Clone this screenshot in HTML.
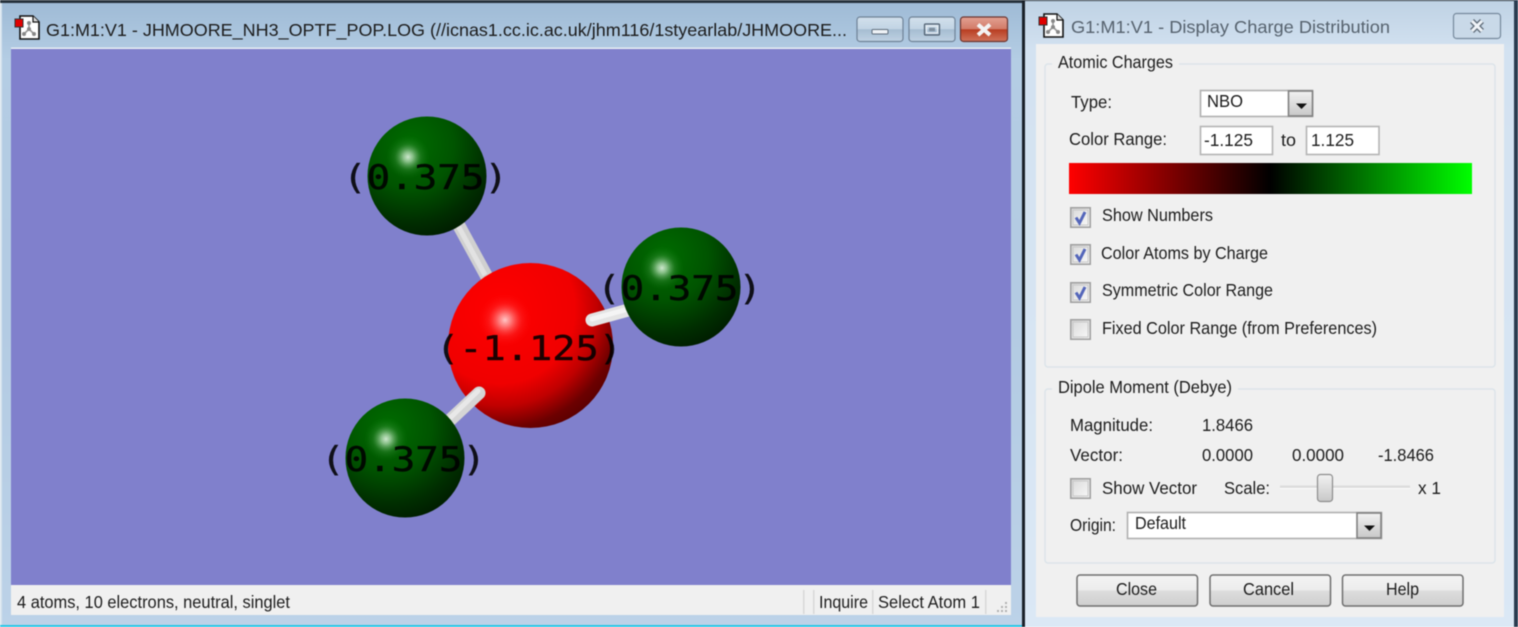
<!DOCTYPE html>
<html>
<head>
<meta charset="utf-8">
<title>G1:M1:V1</title>
<style>
html,body{margin:0;padding:0;width:1518px;height:627px;overflow:hidden;background:#fff}
svg{display:block;filter:blur(.45px)}
text{font-family:"Liberation Sans",sans-serif;font-size:17.5px;fill:#1c1c1c}
.m{font-family:"DejaVu Sans Mono","Liberation Mono",monospace;font-size:34px;fill:#000;fill-opacity:.88;stroke:#000;stroke-opacity:.7;stroke-width:.5px}
</style>
</head>
<body>
<svg width="1518" height="627" viewBox="0 0 1518 627" xmlns="http://www.w3.org/2000/svg">
<defs>
<linearGradient id="lf" x1="0" y1="0" x2="0" y2="1"><stop offset="0" stop-color="#9fbbd6"/><stop offset=".09" stop-color="#b4cde4"/><stop offset=".5" stop-color="#b3cbe3"/><stop offset="1" stop-color="#bcd2e8"/></linearGradient>
<linearGradient id="rf" x1="0" y1="0" x2="0" y2="1"><stop offset="0" stop-color="#bfd2e4"/><stop offset=".08" stop-color="#d3e2f1"/><stop offset="1" stop-color="#dbe8f5"/></linearGradient>
<linearGradient id="bar" x1="0" y1="0" x2="1" y2="0"><stop offset="0" stop-color="#ff0000"/><stop offset=".5" stop-color="#000"/><stop offset="1" stop-color="#00ff00"/></linearGradient>
<linearGradient id="btn" x1="0" y1="0" x2="0" y2="1"><stop offset="0" stop-color="#f4f4f4"/><stop offset=".48" stop-color="#ececec"/><stop offset=".52" stop-color="#dcdcdc"/><stop offset="1" stop-color="#cfcfcf"/></linearGradient>
<linearGradient id="wb" x1="0" y1="0" x2="0" y2="1"><stop offset="0" stop-color="#d2e0ec"/><stop offset=".48" stop-color="#c2d4e4"/><stop offset=".52" stop-color="#a6bdd2"/><stop offset="1" stop-color="#c0d2e3"/></linearGradient>
<linearGradient id="cb" x1="0" y1="0" x2="0" y2="1"><stop offset="0" stop-color="#e3a193"/><stop offset=".48" stop-color="#d27c69"/><stop offset=".52" stop-color="#b83e22"/><stop offset="1" stop-color="#d0745c"/></linearGradient>
<linearGradient id="dd" x1="0" y1="0" x2="0" y2="1"><stop offset="0" stop-color="#f2f2f2"/><stop offset="1" stop-color="#c8c8c8"/></linearGradient>
<linearGradient id="chk" x1="0" y1="0" x2="1" y2="1"><stop offset="0" stop-color="#d8d8d8"/><stop offset="1" stop-color="#fafafa"/></linearGradient>
<radialGradient id="g" cx=".36" cy=".24" r=".92"><stop offset="0" stop-color="#006c00"/><stop offset=".4" stop-color="#005400"/><stop offset=".7" stop-color="#002e00"/><stop offset="1" stop-color="#001000"/></radialGradient>
<radialGradient id="r" cx=".32" cy=".28" r=".9"><stop offset="0" stop-color="#ff0000"/><stop offset=".5" stop-color="#f00000"/><stop offset=".65" stop-color="#c00000"/><stop offset=".8" stop-color="#6c0000"/><stop offset="1" stop-color="#400000"/></radialGradient>
<radialGradient id="hg"><stop offset="0" stop-color="#cfe8cf"/><stop offset=".22" stop-color="#a0d0a0" stop-opacity=".85"/><stop offset=".6" stop-color="#50a050" stop-opacity=".28"/><stop offset="1" stop-color="#108010" stop-opacity="0"/></radialGradient>
<radialGradient id="hr"><stop offset="0" stop-color="#ffc8c8"/><stop offset=".22" stop-color="#ff9090" stop-opacity=".85"/><stop offset=".6" stop-color="#ff4040" stop-opacity=".3"/><stop offset="1" stop-color="#ff0000" stop-opacity="0"/></radialGradient>
<g id="ic">
<path d="M5 1H18L24 7V24H5Z" fill="#fff" stroke="#111" stroke-width="1.6"/>
<path d="M18 1V7H24" fill="#ddd" stroke="#111" stroke-width="1.2"/>
<path d="M14 8V14L9 19M14 14L19 19" fill="none" stroke="#999" stroke-width="1.6"/>
<circle cx="14" cy="8" r="2" fill="#888"/><circle cx="14" cy="14" r="2" fill="#888"/><circle cx="9" cy="19" r="2" fill="#888"/><circle cx="19" cy="19" r="2" fill="#888"/>
<rect x="0" y="4" width="8" height="8" fill="#e00000" stroke="#333" stroke-width="1"/>
</g>
<g id="tick"><rect x=".8" y=".8" width="19.4" height="19.4" fill="url(#chk)" stroke="#a0a0a0" stroke-width="1.6"/><rect x="3" y="3" width="15" height="15" fill="none" stroke="#c8c8c8" stroke-width="1"/></g>
<path id="v" d="M6 10.500L9.500 16L15 5" fill="none" stroke="#5466ba" stroke-width="3"/>
</defs>

<rect width="1518" height="627" fill="#26323c"/>

<!-- left window -->
<rect x="0" y="3" width="1022" height="622" fill="url(#lf)"/>
<rect x="0" y="3" width="2" height="622" fill="#d8e4ee"/>
<rect x="0" y="625" width="1023" height="2" fill="#27c6e6"/>
<use href="#ic" x="15" y="15"/>
<text x="46" y="36" textLength="801" lengthAdjust="spacingAndGlyphs" fill="#151515">G1:M1:V1 - JHMOORE_NH3_OPTF_POP.LOG (//icnas1.cc.ic.ac.uk/jhm116/1styearlab/JHMOORE...</text>
<rect x="857" y="17" width="46" height="24.5" rx="3" fill="url(#wb)" stroke="#6f8296" stroke-width="1.2"/>
<rect x="909" y="17" width="46" height="24.5" rx="3" fill="url(#wb)" stroke="#6f8296" stroke-width="1.2"/>
<rect x="960.5" y="17" width="47" height="24.5" rx="3" fill="url(#cb)" stroke="#6b3530" stroke-width="1.2"/>
<rect x="872" y="29.5" width="16" height="4.5" rx="1" fill="#eef2f6" stroke="#5d6c7c"/>
<rect x="924.5" y="24" width="15" height="11" rx="1" fill="none" stroke="#4f5e6e" stroke-width="1.2"/>
<rect x="926.5" y="26" width="11" height="7" fill="none" stroke="#eef2f6" stroke-width="1"/>
<rect x="929" y="27.8" width="6" height="3.4" fill="#7d8d9d"/>
<path d="M978 24.500L990 35M990 24.500L978 35" stroke="#f3f3f3" stroke-width="4"/>
<rect x="11" y="47.5" width="1000" height="2" fill="#e8eef4"/>
<rect x="11" y="49" width="1000" height="536" fill="#8080cc"/>
<rect x="11" y="585" width="1000" height="30" fill="#f0f0f0"/>

<!-- molecule -->
<line x1="457.5" y1="223" x2="487" y2="277" stroke="#d0d0d0" stroke-width="13"/>
<line x1="456" y1="222" x2="485" y2="275" stroke="#e2e2e2" stroke-width="5"/>
<circle cx="530.5" cy="345.5" r="82.5" fill="url(#r)"/>
<circle cx="505" cy="320" r="28" fill="url(#hr)"/>
<line x1="448" y1="422" x2="479" y2="393" stroke="#d5d5d5" stroke-width="13" stroke-linecap="round"/>
<line x1="448" y1="420" x2="478" y2="391" stroke="#e8e8e8" stroke-width="5" stroke-linecap="round"/>
<line x1="592" y1="320" x2="632" y2="309" stroke="#e4e4e4" stroke-width="13" stroke-linecap="round"/>
<line x1="592" y1="319" x2="632" y2="308" stroke="#f4f4f4" stroke-width="5" stroke-linecap="round"/>
<circle cx="427" cy="176" r="59.5" fill="url(#g)"/>
<circle cx="408" cy="157" r="22" fill="url(#hg)"/>
<circle cx="681" cy="287" r="59.5" fill="url(#g)"/>
<circle cx="662" cy="268" r="22" fill="url(#hg)"/>
<circle cx="405" cy="458" r="59.5" fill="url(#g)"/>
<circle cx="386" cy="439" r="22" fill="url(#hg)"/>
<text class="m" x="343" y="189" textLength="165" lengthAdjust="spacingAndGlyphs">(0.375)</text>
<text class="m" x="597" y="300" textLength="165" lengthAdjust="spacingAndGlyphs">(0.375)</text>
<text class="m" x="321" y="471" textLength="165" lengthAdjust="spacingAndGlyphs">(0.375)</text>
<text class="m" x="436" y="360" textLength="186" lengthAdjust="spacingAndGlyphs">(-1.125)</text>

<!-- status bar -->
<text x="17" y="608" textLength="273" lengthAdjust="spacingAndGlyphs">4 atoms, 10 electrons, neutral, singlet</text>
<g fill="#d8d8d8"><rect x="803" y="590" width="1.5" height="24"/><rect x="813" y="590" width="1.5" height="24"/><rect x="872" y="590" width="1.5" height="24"/><rect x="985" y="590" width="1.5" height="24"/></g>
<text x="819" y="608" textLength="49" lengthAdjust="spacingAndGlyphs">Inquire</text>
<text x="878" y="608" textLength="102" lengthAdjust="spacingAndGlyphs">Select Atom 1</text>
<g fill="#b0b0b0"><rect x="1005" y="602" width="2" height="2"/><rect x="1001" y="606" width="2" height="2"/><rect x="1005" y="606" width="2" height="2"/><rect x="997" y="610" width="2" height="2"/><rect x="1001" y="610" width="2" height="2"/><rect x="1005" y="610" width="2" height="2"/></g>

<!-- right window -->
<rect x="1022" y="0" width="3" height="627" fill="#1a2129"/>
<rect x="1025" y="1" width="489" height="626" fill="url(#rf)"/>
<rect x="1514" y="0" width="4" height="627" fill="#2a3c50"/>
<use href="#ic" x="1039" y="13"/>
<text x="1071" y="33" textLength="319" lengthAdjust="spacingAndGlyphs" style="fill:#56626e">G1:M1:V1 - Display Charge Distribution</text>
<rect x="1453.5" y="13.5" width="47" height="25" rx="3" fill="#c9d9e8" stroke="#76899c" stroke-width="1.2"/>
<path d="M1472 21L1482 31M1482 21L1472 31" stroke="#5f6c79" stroke-width="5.5"/>
<path d="M1472 21L1482 31M1482 21L1472 31" stroke="#f0f4f8" stroke-width="3"/>
<rect x="1036" y="44" width="468" height="573" fill="#f0f0f0"/>

<!-- atomic charges -->
<rect x="1045" y="64" width="450" height="303" rx="3" fill="none" stroke="#dce4ea" stroke-width="1.5"/>
<rect x="1052" y="58" width="127" height="10" fill="#f0f0f0"/>
<text x="1058" y="68" textLength="115" lengthAdjust="spacingAndGlyphs">Atomic Charges</text>
<text x="1071" y="108" textLength="41" lengthAdjust="spacingAndGlyphs">Type:</text>
<rect x="1200.5" y="90.5" width="112" height="26" fill="#fff" stroke="#b0b0b0" stroke-width="1.6"/>
<text x="1207" y="107" textLength="36" lengthAdjust="spacingAndGlyphs">NBO</text>
<rect x="1288.5" y="91" width="24" height="25" fill="url(#dd)" stroke="#808080" stroke-width="1.6"/>
<path d="M1296 103.500H1307L1301.500 109Z" fill="#111"/>
<text x="1069" y="145" textLength="98" lengthAdjust="spacingAndGlyphs">Color Range:</text>
<rect x="1200.5" y="126.5" width="72" height="28" fill="#fff" stroke="#b4b4b4" stroke-width="1.6"/>
<text x="1204" y="146" textLength="49" lengthAdjust="spacingAndGlyphs">-1.125</text>
<text x="1281" y="146" textLength="15" lengthAdjust="spacingAndGlyphs">to</text>
<rect x="1306.5" y="126.5" width="72.5" height="28" fill="#fff" stroke="#b4b4b4" stroke-width="1.6"/>
<text x="1311" y="146" textLength="43" lengthAdjust="spacingAndGlyphs">1.125</text>
<rect x="1069" y="163" width="403" height="31" fill="url(#bar)"/>

<use href="#tick" x="1070" y="207"/><use href="#v" x="1070" y="207"/>
<text x="1102" y="221" textLength="111" lengthAdjust="spacingAndGlyphs">Show Numbers</text>
<use href="#tick" x="1070" y="244"/><use href="#v" x="1070" y="244"/>
<text x="1101" y="259" textLength="167" lengthAdjust="spacingAndGlyphs">Color Atoms by Charge</text>
<use href="#tick" x="1070" y="282"/><use href="#v" x="1070" y="282"/>
<text x="1102" y="296" textLength="171" lengthAdjust="spacingAndGlyphs">Symmetric Color Range</text>
<use href="#tick" x="1070" y="319"/>
<text x="1102" y="334" textLength="275" lengthAdjust="spacingAndGlyphs">Fixed Color Range (from Preferences)</text>

<!-- dipole -->
<rect x="1045" y="389" width="450" height="174" rx="3" fill="none" stroke="#dce4ea" stroke-width="1.5"/>
<rect x="1052" y="383" width="186" height="10" fill="#f0f0f0"/>
<text x="1058" y="393" textLength="174" lengthAdjust="spacingAndGlyphs">Dipole Moment (Debye)</text>
<text x="1070" y="431" textLength="83" lengthAdjust="spacingAndGlyphs">Magnitude:</text>
<text x="1202" y="431" textLength="51" lengthAdjust="spacingAndGlyphs">1.8466</text>
<text x="1070" y="461" textLength="53" lengthAdjust="spacingAndGlyphs">Vector:</text>
<text x="1202" y="461" textLength="51" lengthAdjust="spacingAndGlyphs">0.0000</text>
<text x="1292" y="461" textLength="52" lengthAdjust="spacingAndGlyphs">0.0000</text>
<text x="1378" y="461" textLength="56" lengthAdjust="spacingAndGlyphs">-1.8466</text>
<use href="#tick" x="1070" y="478"/>
<text x="1102" y="494" textLength="95" lengthAdjust="spacingAndGlyphs">Show Vector</text>
<text x="1224" y="494" textLength="46" lengthAdjust="spacingAndGlyphs">Scale:</text>
<rect x="1280" y="485.500" width="130" height="3" fill="#dcdcdc"/>
<rect x="1280" y="488" width="130" height="1" fill="#fff"/>
<rect x="1317.500" y="474.500" width="15" height="27" rx="3" fill="url(#dd)" stroke="#8c8c8c" stroke-width="1.2"/>
<text x="1418" y="494" textLength="23" lengthAdjust="spacingAndGlyphs">x 1</text>
<text x="1070" y="531" textLength="46" lengthAdjust="spacingAndGlyphs">Origin:</text>
<rect x="1127.500" y="512.500" width="254" height="26" fill="#fff" stroke="#b0b0b0" stroke-width="1.6"/>
<text x="1135" y="529" textLength="51" lengthAdjust="spacingAndGlyphs">Default</text>
<rect x="1357" y="513" width="24" height="25" fill="url(#dd)" stroke="#808080" stroke-width="1.6"/>
<path d="M1364 525.500H1375L1369.500 531Z" fill="#111"/>

<!-- buttons -->
<rect x="1077" y="575" width="120.500" height="31" rx="3" fill="url(#btn)" stroke="#6e6e6e" stroke-width="1.5"/>
<rect x="1210" y="575" width="120.500" height="31" rx="3" fill="url(#btn)" stroke="#6e6e6e" stroke-width="1.5"/>
<rect x="1342.500" y="575" width="120.500" height="31" rx="3" fill="url(#btn)" stroke="#6e6e6e" stroke-width="1.5"/>
<text x="1116" y="595" textLength="41" lengthAdjust="spacingAndGlyphs">Close</text>
<text x="1243" y="595" textLength="51" lengthAdjust="spacingAndGlyphs">Cancel</text>
<text x="1386" y="595" textLength="33" lengthAdjust="spacingAndGlyphs">Help</text>
</svg>
</body>
</html>
